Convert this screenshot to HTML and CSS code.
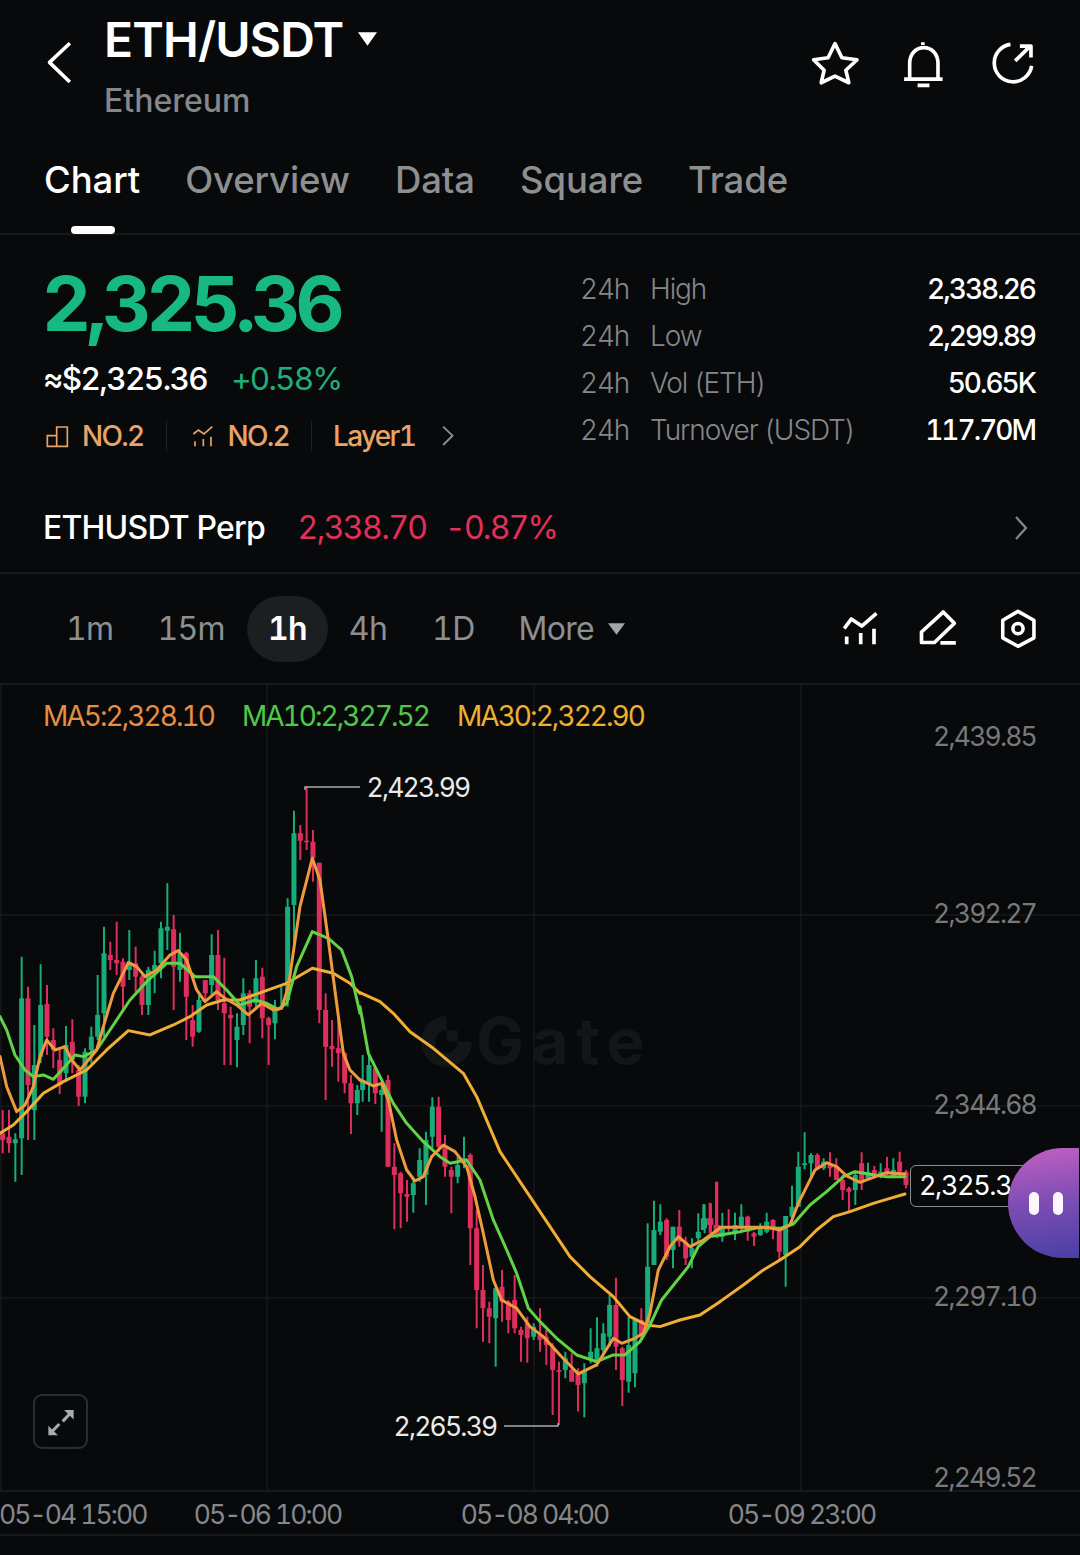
FILE: index.html
```html
<!DOCTYPE html>
<html lang="en">
<head>
<meta charset="utf-8">
<title>ETH/USDT</title>
<link rel="stylesheet" href="styles.css">
</head>
<body>
<div class="page">
  <header class="header">
    <svg class="back" viewBox="130 120 90 140"><path class="ic" d="M205 130L143 188L205 248"/></svg>
    <div class="title-block">
      <div class="title-row">
        <h1 class="title">ETH/USDT</h1>
        <svg class="title-caret" viewBox="0 0 20 14"><path class="fill-w" d="M0 0H20L10 14Z"/></svg>
      </div>
      <div class="subtitle">Ethereum</div>
    </div>
    <div class="header-icons">
      <svg class="hi hi-star" viewBox="90 55 152 152"><path class="ic" d="M166 69L187 112L233 118L199 150L208 188L166 168L124 188L133 150L101 118L145 112Z"/></svg>
      <svg class="hi hi-bell" viewBox="360 50 148 152"><path class="ic" d="M375 172H492M392 172V125C392 60 478 60 478 125V172M416 191H452M432 60V68"/></svg>
      <svg class="hi hi-share" viewBox="630 60 140 140"><path class="ic" d="M694 76A56 56 0 1 0 757 140M708 125L752 82M722 81H755V115"/></svg>
    </div>
  </header>

  <nav class="tabs">
    <div class="tab tab-on">Chart<span class="tab-bar"></span></div>
    <div class="tab">Overview</div>
    <div class="tab">Data</div>
    <div class="tab">Square</div>
    <div class="tab">Trade</div>
  </nav>

  <section class="stats">
    <div class="stats-left">
      <div class="price">2,325.36</div>
      <div class="sub-price"><span class="approx">≈$2,325.36</span><span class="change">+0.58%</span></div>
      <div class="tags">
        <svg class="tag-ic" viewBox="130 70 75 75"><path class="ic-tag" d="M137 137V105H165V137ZM165 105V79H197V137H165"/></svg>
        <span class="tag-t">NO.2</span>
        <i class="tag-sep"></i>
        <svg class="tag-ic" viewBox="553 70 75 75"><path class="ic-tag" d="M560 100L575 88L592 100L617 78M565 122V137M590 115V137M613 108V137"/></svg>
        <span class="tag-t">NO.2</span>
        <i class="tag-sep"></i>
        <span class="tag-t">Layer1</span>
        <svg class="tag-chev" viewBox="1275 75 45 68"><path class="ic-grey" d="M1284 80L1313 108L1284 137"/></svg>
      </div>
    </div>
    <dl class="stats-right">
      <div class="stat"><dt>24h</dt><dd class="stat-l">High</dd><dd class="stat-v">2,338.26</dd></div>
      <div class="stat"><dt>24h</dt><dd class="stat-l">Low</dd><dd class="stat-v">2,299.89</dd></div>
      <div class="stat"><dt>24h</dt><dd class="stat-l">Vol (ETH)</dd><dd class="stat-v">50.65K</dd></div>
      <div class="stat"><dt>24h</dt><dd class="stat-l">Turnover (USDT)</dd><dd class="stat-v">117.70M</dd></div>
    </dl>
  </section>

  <section class="perp">
    <span class="perp-name">ETHUSDT Perp</span>
    <span class="perp-price">2,338.70</span>
    <span class="perp-change">-0.87%</span>
    <svg class="perp-chev" viewBox="0 0 14 26"><path class="ic-grey2" d="M2 2L12 13L2 24"/></svg>
  </section>

  <section class="toolbar">
    <div class="tf">1m</div>
    <div class="tf tf-15">15m</div>
    <div class="tf tf-on">1h</div>
    <div class="tf tf-4">4h</div>
    <div class="tf tf-1d">1D</div>
    <div class="tf tf-more">More<svg class="more-caret" viewBox="0 0 18 12"><path class="fill-g" d="M0 0H18L9 12Z"/></svg></div>
    <div class="tools">
      <svg class="tool" viewBox="115 60 120 110"><path class="ic-t" d="M130 115L150 88L180 108L222 72M137 138V160M177 128V160M215 116V160"/></svg>
      <svg class="tool" viewBox="358 60 120 110"><path class="ic-t" d="M368 125L430 68L462 100L405 155H368ZM422 156H466"/></svg>
      <svg class="tool" viewBox="595 60 120 115"><path class="ic-t" d="M655 67L702 93V145L655 170L610 145V93Z"/><circle class="ic-t" cx="655" cy="118" r="15"/></svg>
    </div>
  </section>

  <section class="chart">
    <div class="watermark">
      <svg class="wm-logo" viewBox="0 0 50 50"><path class="wm-fill" d="M25 0A25 25 0 1 0 50 25H36A11 11 0 1 1 25 14ZM25 14H36V25H25Z"/></svg>
      <span class="wm-text">Gate</span>
    </div>

    <svg class="plot" viewBox="0 685 1080 805">
      <path class="grid" d="M0 915H1080M0 1106H1080M0 1298H1080M1 685V1490M267 685V1490M534 685V1490M801 685V1490"/>
      <g transform="translate(0 780) scale(.3333)">
        <path class="wick-r" d="M8 990V1120M27 990V1118M84 620V1080M141 615V825M160 745V865M179 810V942M217 718V880M236 855V978M331 485V570M350 425V585M369 535V695M407 500V635M426 585V705M521 405V690M559 515V780M578 675V800M616 600V660M654 450V690M673 533V855M692 680V855M749 630V790M787 563V775M806 710V855M901 135V240M920 20V210M939 150V305M958 248V730M977 640V960M996 720V860M1015 705V905M1034 815V940M1053 885V1062"/>
        <path class="wick-g" d="M46 1060V1205M65 530V1185M103 735V1080M122 553V850M198 738V905M255 805V970M274 740V850M293 585V780M312 440V770M388 450V600M445 560V705M464 512V640M483 425V595M502 310V510M540 458V605M597 645V758M635 463V650M711 700V862M730 595V765M768 540V680M825 660V778M844 620V680M863 355V680M882 92V490M1072 915V1005"/>
        <path class="body-r" d="M8 1060V1080M27 1070V1090M84 655V915M141 672V770M160 780V810M179 840V915M217 785V840M236 870V950M331 525V540M350 540V550M369 545V620M407 550V590M426 590V675M521 448V560M559 520V650M578 720V770M616 600V640M654 525V660M673 670V700M692 705V715M749 640V680M787 590V715M806 715V735M901 160V182M920 182V187M939 185V235M958 248V690M977 690V800M996 798V808M1015 805V820M1034 820V910M1053 910V970"/>
        <path class="body-g" d="M46 1078V1090M65 655V1075M103 855V990M122 675V830M198 795V880M255 815V950M274 770V810M293 705V770M312 520V700M388 545V570M445 570V675M464 555V570M483 445V550M502 440V452M540 520V570M597 660V755M635 525V615M711 740V780M730 640V735M768 595V670M825 685V730M863 380V660M882 160V375M1072 930V970"/>
      </g>
      <g transform="translate(360 980) scale(.3333)">
        <path class="wick-r" d="M46 260V372M84 285V560M103 490V748M122 575V745M141 600V725M236 350V515M255 465V590M274 560V700M331 520V855M350 690V1045M369 855V1085M388 965V1090M426 870V1025M445 960V1060M464 885V1060M483 1040V1145M502 1010V1148M540 985V1115M559 1050V1155M578 1090V1305M597 1145V1335M635 1120V1205M654 1165V1295M768 893V1170M787 1100V1278M844 985V1075M920 715V840M958 690V800M977 770V855M1053 670V760M1072 605V775"/>
        <path class="wick-g" d="M8 225V365M27 225V365M65 310V455M160 600V698M179 505V605M198 455V675M217 352V505M293 530V610M312 470V565M407 920V1160M521 1030V1080M616 1115V1195M673 1150V1312M692 1045V1150M711 1012V1160M730 1030V1130M749 945V1100M806 1010V1238M825 1015V1222M863 730V1040M882 662V855M901 673V765M939 740V865M996 775V865M1015 700V790M1034 673V760"/>
        <path class="body-r" d="M46 265V340M84 300V560M103 560V585M122 580V640M141 642V650M236 380V500M255 500V560M274 570V590M331 525V745M350 745V930M369 930V985M388 985V1010M426 920V965M445 965V1020M464 960V1045M483 1050V1065M502 1030V1075M540 1065V1080M559 1070V1095M578 1100V1170M597 1170V1175M635 1170V1205M654 1180V1215M768 975V1100M787 1105V1200M844 1020V1065M920 720V830M958 740V785M977 785V835M1053 715V735M1072 735V765"/>
        <path class="body-g" d="M8 300V330M27 255V310M65 330V345M160 610V645M179 540V590M198 480V585M217 380V470M293 555V590M312 535V550M407 925V1015M521 1040V1070M616 1135V1170M673 1170V1210M692 1115V1140M711 1105V1150M730 1060V1110M749 975V1070M806 1095V1205M825 1020V1180M863 860V1030M882 750V855M901 725V755M939 740V810M996 805V830M1015 755V775M1034 715V745"/>
      </g>
      <g transform="translate(700 1120) scale(.3333)">
        <path class="wick-r" d="M29 248V340M48 185V340M86 268V335M143 287V362M162 335V378M219 298V358M238 325V420M352 100V150M390 97V170M409 115V180M428 165V240M447 200V275M485 97V210M523 138V175M561 110V165M599 95V170M618 150V205"/>
        <path class="wick-g" d="M10 253V330M67 278V365M105 278V360M124 253V340M181 310V348M200 278V340M257 288V500M276 197V310M295 95V260M314 37V148M333 100V175M371 115V150M466 155V255M504 128V178M542 130V175M580 115V175"/>
        <path class="body-r" d="M29 295V315M48 315V335M86 320V325M143 290V335M162 340V350M219 300V325M238 330V395M352 105V145M390 130V145M409 140V180M428 180V210M447 205V215M485 130V190M523 150V165M561 145V160M599 125V155M618 155V195"/>
        <path class="body-g" d="M10 295V330M67 320V350M105 315V340M124 290V320M181 318V345M200 305V335M257 288V405M276 260V290M295 140V260M314 130V135M333 105V130M371 125V145M466 165V210M504 155V175M542 155V170M580 150V170"/>
      </g>
      <g transform="translate(0 780) scale(.3333)">
        <path class="ma30" d="M0 1060L40 1035L80 995L130 940L190 905L260 870L320 810L385 752L450 765L520 735L570 710L620 675L670 660L720 660L790 635L860 610L937 565L1000 580L1050 610L1080 640"/>
        <path class="ma10" d="M0 710L20 750L45 825L75 870L100 890L130 885L160 898L195 860L225 825L250 830L290 810L330 750L390 660L440 605L500 550L540 550L585 590L640 590L680 630L720 675L765 660L800 670L835 688L860 670L890 560L937 455L985 475L1025 510L1055 590L1080 700"/>
        <path class="ma5" d="M0 830L20 920L50 995L75 975L100 920L120 830L140 780L165 810L195 800L215 840L240 870L265 840L290 810L310 740L340 640L385 548L410 560L435 590L470 570L510 525L535 512L560 540L590 630L615 665L650 635L675 655L710 675L745 705L785 670L820 690L845 685L865 620L900 380L937 235L960 300L985 480L1010 670L1030 820L1050 870L1080 900"/>
      </g>
      <g transform="translate(360 980) scale(.3333)">
        <path class="ma30" d="M0 38L60 65L100 100L150 155L220 205L310 280L350 350L420 515L500 635L570 740L630 830L690 890L760 950L810 1010L860 1035L900 1040L960 1020L1020 1005L1080 965"/>
        <path class="ma10" d="M0 80L25 220L60 290L100 370L140 430L190 485L240 530L270 550L320 540L360 600L400 720L440 810L470 880L505 985L540 1025L590 1075L650 1125L710 1145L760 1125L795 1125L840 1085L870 1035L905 960L945 910L985 860L1015 800L1050 770L1080 765"/>
        <path class="ma5" d="M0 300L40 318L65 310L85 360L110 480L140 570L165 603L190 590L215 530L250 495L285 515L320 560L345 650L370 760L400 900L425 960L470 985L510 1040L550 1070L600 1125L655 1182L710 1155L760 1075L785 1090L825 1075L850 1060L870 1000L895 870L930 800L955 770L990 800L1030 780L1080 745"/>
      </g>
      <g transform="translate(700 1120) scale(.3333)">
        <path class="ma30" d="M60 545L130 495L190 450L240 420L300 380L350 330L400 290L450 275L520 250L570 235L615 222"/>
        <path class="ma10" d="M60 345L120 335L180 322L240 325L280 312L330 255L380 215L430 170L465 155L510 163L560 170L615 170"/>
        <path class="ma5" d="M60 322L100 322L150 322L200 322L240 330L270 315L295 250L320 200L345 150L380 128L410 140L440 168L480 187L520 172L560 158L615 162"/>
      </g>
      <path class="mark" d="M305 790V787H360M504 1426H558V1423"/>
    </svg>

    <div class="legend">
      <span class="ma-t5">MA5:2,328.10</span>
      <span class="ma-t10">MA10:2,327.52</span>
      <span class="ma-t30">MA30:2,322.90</span>
    </div>

    <span class="yl yl-1">2,439.85</span>
    <span class="yl yl-2">2,392.27</span>
    <span class="yl yl-3">2,344.68</span>
    <span class="yl yl-4">2,297.10</span>
    <span class="yl yl-5">2,249.52</span>

    <span class="extreme ex-hi">2,423.99</span>
    <span class="extreme ex-lo">2,265.39</span>

    <div class="price-tag">2,325.36</div>

    <div class="expand">
      <svg class="expand-ic" viewBox="140 80 82 82"><path class="expand-a" d="M218 86H190L218 114ZM144 160H172L144 132Z"/><path class="expand-l" d="M207 97L186 119M155 149L176 127"/></svg>
    </div>

    <div class="bubble"><i class="pill"></i><i class="pill"></i></div>
  </section>

  <footer class="axis">
    <span class="ax ax-first">05-04 15:00</span>
    <span class="ax">05-06 10:00</span>
    <span class="ax">05-08 04:00</span>
    <span class="ax">05-09 23:00</span>
  </footer>
</div>
</body>
</html>
```

FILE: styles.css
```css
* { box-sizing: border-box; }
html, body { margin: 0; padding: 0; background: #08090a; }
body { font-family: Inter, "Liberation Sans", sans-serif; color: #fff; font-variant-numeric: tabular-nums; }
.page { width: 1080px; height: 1555px; overflow: hidden; background: #08090a; position: relative; }

/* icon strokes */
svg { display: block; flex: none; }
.ic { fill: none; stroke: #fff; stroke-width: 11; stroke-linejoin: round; }
.ic-tag { fill: none; stroke: #e8a468; stroke-width: 5; }
.ic-grey { fill: none; stroke: #8b8d8f; stroke-width: 6; }
.ic-grey2 { fill: none; stroke: #85878a; stroke-width: 2.2; }
.ic-t { fill: none; stroke: #fff; stroke-width: 10.5; stroke-linejoin: round; }
.fill-w { fill: #fff; }
.fill-g { fill: #a2a4a6; }

/* header */
.header { display: flex; align-items: flex-start; height: 146px; padding-left: 45px; }
.back { width: 30px; height: 46px; margin-top: 40px; }
.title-block { margin-left: 29px; }
.title-row { display: flex; align-items: center; height: 80px; }
.title { margin: 0; font-size: 48px; font-weight: 600; letter-spacing: -.85px; line-height: 80px; }
.title-caret { width: 19px; height: 14px; margin-left: 15px; margin-top: -3px; }
.subtitle { font-size: 32px; font-weight: 500; color: #85878a; line-height: 42px; }
.header-icons { display: flex; margin-left: auto; margin-top: 39px; padding-right: 44px; gap: 39px; align-items: flex-start; }
.hi-star { width: 50px; height: 50px; }
.hi-bell { width: 49px; height: 50px; margin-right: 2px; }
.hi-share { width: 47px; height: 47px; }

/* tabs */
.tabs { display: flex; gap: 45px; height: 89px; padding-left: 44px; border-bottom: 2px solid #17191a; }
.tab { position: relative; font-size: 36.5px; font-weight: 500; color: #8d8f91; letter-spacing: -.1px; line-height: 68px; }
.tab-on { color: #fff; }
.tab-bar { position: absolute; left: 27px; bottom: -1px; width: 44px; height: 8px; border-radius: 4px; background: #fff; }

/* stats */
.stats { display: flex; height: 248px; }
.stats-left { width: 580px; padding-left: 43px; padding-top: 22px; }
.price { margin-left: -1px; font-size: 76px; font-weight: 700; color: #17b981; letter-spacing: -4.7px; line-height: 92px; }
.sub-price { display: flex; gap: 24px; margin-top: 10px; font-size: 31.5px; line-height: 40px; font-weight: 500; letter-spacing: -1.6px; }
.change { color: #1fae7c; font-weight: 400; letter-spacing: -1.8px; }
.tags { display: flex; align-items: center; margin-top: 19px; height: 36px; padding-left: 2px; }
.tag-ic { width: 25px; height: 25px; }
.tag-t { margin-left: 12px; font-size: 28px; font-weight: 500; color: #e8a468; letter-spacing: -1.7px; }
.tag-sep { width: 1px; height: 30px; margin: 0 21px 0 22px; background: #202223; }
.tag-sep + .tag-t { margin-left: 0; }
.tag-sep + .tag-ic { margin-left: 3px; }
.tag-chev { width: 15px; height: 22px; margin-left: 25px; }
.stats-right { margin: 0; padding: 30px 45px 0 0; flex: 1; }
.stat { display: flex; height: 47px; align-items: center; font-size: 28px; }
.stat dt { width: 70px; color: #85878a; font-weight: 300; letter-spacing: -1.2px; }
.stat dd { margin: 0; }
.stat-l { color: #85878a; font-weight: 300; letter-spacing: -1.1px; }
.stat-v { margin-left: auto !important; color: #fff; font-weight: 500; letter-spacing: -2px; }

/* perp */
.perp { display: flex; align-items: center; height: 91px; padding: 0 52px 0 43px; border-bottom: 2px solid #17191a; font-size: 32px; letter-spacing: -.8px; }
.perp-name { font-weight: 500; }
.perp-price { margin-left: 32.5px; color: #e52f5a; letter-spacing: -1.6px; }
.perp-change { margin-left: 18.5px; color: #e52f5a; letter-spacing: -1.8px; }
.perp-chev { width: 14px; height: 26px; margin-left: auto; }

/* toolbar */
.toolbar { display: flex; align-items: center; height: 111px; padding-left: 66px; border-bottom: 2px solid #17191a; font-size: 32px; color: #8d8f91; font-weight: 400; }
.tf { letter-spacing: -.7px; }
.tf-15 { margin-left: 44px; }
.tf-on { display: flex; align-items: center; justify-content: center; width: 81px; height: 66px; margin-left: 22px; border-radius: 33px; background: #1c1f20; color: #fff; font-weight: 600; }
.tf-4 { margin-left: 21px; }
.tf-1d { margin-left: 45px; }
.tf-more { display: flex; align-items: center; margin-left: 44px; }
.more-caret { width: 17px; height: 12px; margin-left: 14px; }
.tools { display: flex; align-items: center; gap: 37px; margin-left: auto; padding-right: 41px; }
.tool { width: 42px; height: 39px; }

/* chart */
.chart { position: relative; height: 805px; }
.plot { position: absolute; inset: 0; width: 1080px; height: 805px; }
.grid { fill: none; stroke: #17191a; stroke-width: 1.5; }
.wick-r, .body-r { fill: none; stroke: #dd2e5d; }
.wick-g, .body-g { fill: none; stroke: #17ac79; }
.wick-r, .wick-g { stroke-width: 6; }
.body-r, .body-g { stroke-width: 15; }
.ma5, .ma10, .ma30 { fill: none; stroke-width: 9; stroke-linejoin: round; stroke-linecap: round; }
.ma5 { stroke: #ee9a3e; }
.ma10 { stroke: #62d246; }
.ma30 { stroke: #f0ae35; }
.mark { fill: none; stroke: #a9abac; stroke-width: 1.5; }

.legend { position: absolute; left: 43px; top: 13px; display: flex; gap: 28px; font-size: 28px; letter-spacing: -1.95px; line-height: 36px; }
.ma-t5 { color: #e58e44; }
.ma-t10 { color: #4fc94a; }
.ma-t30 { color: #eeb02f; }

.watermark { position: absolute; left: 421px; top: 324px; display: flex; align-items: center; gap: 4px; }
.wm-logo { width: 51px; height: 51px; }
.wm-fill { fill: #131516; fill-rule: evenodd; }
.wm-text { font-size: 64px; font-weight: 700; color: #131516; line-height: 64px; letter-spacing: 7.5px; }

.yl { position: absolute; right: 44px; font-size: 26.5px; color: #77797b; letter-spacing: -1.8px; line-height: 34px; }
.yl-1 { top: 34px; }
.yl-2 { top: 211px; }
.yl-3 { top: 402px; }
.yl-4 { top: 594px; }
.yl-5 { top: 775px; }

.extreme { position: absolute; font-size: 26.5px; color: #e9eaea; letter-spacing: -1.8px; line-height: 34px; }
.ex-hi { left: 366.5px; top: 85px; }
.ex-lo { left: 393.5px; top: 724px; }

.price-tag { position: absolute; left: 910px; top: 480px; width: 130px; height: 42px; padding-left: 8px; border: 1.5px solid #8d8f91; border-radius: 6px; background: #08090a; font-size: 27px; line-height: 39px; letter-spacing: -1.4px; }

.expand { position: absolute; left: 33px; top: 709px; display: flex; align-items: center; justify-content: center; width: 55px; height: 55px; border: 2px solid #2b2d2f; border-radius: 9px; }
.expand-ic { width: 28px; height: 28px; }
.expand-a { fill: #a9abac; }
.expand-l { fill: none; stroke: #a9abac; stroke-width: 9; }

.bubble { position: absolute; left: 1008px; top: 463px; display: flex; align-items: center; justify-content: center; gap: 14px; width: 71px; height: 110px; padding-left: 4px; border-radius: 55px 0 0 55px; background: linear-gradient(172deg, #c460c2 0%, #7c4db4 50%, #4a3fa6 100%); }
.pill { width: 10px; height: 23px; border-radius: 5px; background: #fbf6ff; }

/* axis */
.axis { display: grid; grid-template-columns: 134px 267px 267px 267px; height: 46px; padding-top: 1px; align-items: center; border-top: 2px solid #17191a; border-bottom: 2px solid #17191a; font-size: 26.5px; color: #85878a; letter-spacing: -1.95px; white-space: nowrap; }
.ax { text-align: center; }
.ax-first { text-align: left; margin-left: -1px; }
```
